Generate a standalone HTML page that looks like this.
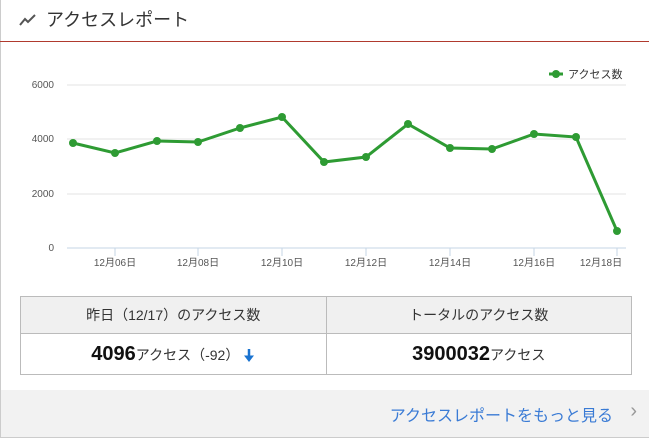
<!DOCTYPE html>
<html><head><meta charset="utf-8"><style>
body{margin:0;width:649px;height:440px;background:#fff;font-family:"Liberation Sans","Noto Sans CJK JP",sans-serif;overflow:hidden;position:relative}
.card{position:absolute;left:0;top:0;width:660px;height:438px;border-left:1px solid #ccc;border-bottom:1px solid #ccc;box-sizing:border-box}
.hd{position:absolute;left:0;top:0;width:649px;height:41px;border-bottom:1px solid #b03a2e}
.hd span{position:absolute;left:46px;top:6px;font-size:18px;color:#333}
table{position:absolute;left:20px;top:296px;width:612px;border-collapse:collapse;font-size:14px;color:#333}
td{border:1px solid #bbb;text-align:center;width:50%}
tr.h td{background:#f0f0f0;height:34px}
tr.v td{height:38px;font-size:14px}
b{font-size:20px;color:#111}
.ft{position:absolute;left:1px;top:390px;width:648px;height:47px;background:#f2f2f2}
.ft span{position:absolute;right:36px;top:12px;color:#3a7bd5;font-size:16px}
.ft i{position:absolute;right:12px;top:10px;color:#999;font-style:normal;font-size:20px}
</style></head><body>
<div class="card"></div>
<div class="hd"><svg style="position:absolute;left:19px;top:13px" width="18" height="14"><polyline points="1,12 6,6 9,9 16,2" fill="none" stroke="#555" stroke-width="2"/></svg><span>アクセスレポート</span></div>
<svg style="position:absolute;left:0;top:60px" width="649" height="220" font-family="Liberation Sans,Noto Sans CJK JP,sans-serif" font-size="10" fill="#555">
<g stroke="#e3e3e3"><line x1="67" y1="25" x2="626" y2="25"/><line x1="67" y1="79" x2="626" y2="79"/><line x1="67" y1="134" x2="626" y2="134"/></g>
<line x1="67" y1="188" x2="626" y2="188" stroke="#c6d6e6"/>
<g text-anchor="end"><text x="54" y="28">6000</text><text x="54" y="82">4000</text><text x="54" y="137">2000</text><text x="54" y="191">0</text></g>
<g stroke="#c6d6e6"><line x1="115" y1="188" x2="115" y2="196"/><line x1="198" y1="188" x2="198" y2="196"/><line x1="282" y1="188" x2="282" y2="196"/><line x1="366" y1="188" x2="366" y2="196"/><line x1="450" y1="188" x2="450" y2="196"/><line x1="534" y1="188" x2="534" y2="196"/><line x1="617" y1="188" x2="617" y2="196"/></g>
<g text-anchor="middle"><text x="115" y="206">12月06日</text><text x="198" y="206">12月08日</text><text x="282" y="206">12月10日</text><text x="366" y="206">12月12日</text><text x="450" y="206">12月14日</text><text x="534" y="206">12月16日</text><text x="601" y="206">12月18日</text></g>
<polyline fill="none" stroke="#2e9b33" stroke-width="3" points="73,83 115,93 157,81 198,82 240,68 282,57 324,102 366,97 408,64 450,88 492,89 534,74 576,77 617,171"/>
<g fill="#2e9b33"><circle cx="73" cy="83" r="4"/><circle cx="115" cy="93" r="4"/><circle cx="157" cy="81" r="4"/><circle cx="198" cy="82" r="4"/><circle cx="240" cy="68" r="4"/><circle cx="282" cy="57" r="4"/><circle cx="324" cy="102" r="4"/><circle cx="366" cy="97" r="4"/><circle cx="408" cy="64" r="4"/><circle cx="450" cy="88" r="4"/><circle cx="492" cy="89" r="4"/><circle cx="534" cy="74" r="4"/><circle cx="576" cy="77" r="4"/><circle cx="617" cy="171" r="4"/>
<line x1="549" y1="14" x2="563" y2="14" stroke="#2e9b33" stroke-width="3"/><circle cx="556" cy="14" r="4"/></g>
<text x="568" y="18" fill="#333" font-size="11">アクセス数</text>
</svg>
<table><tr class="h"><td>昨日（12/17）のアクセス数</td><td>トータルのアクセス数</td></tr>
<tr class="v"><td><b>4096</b>アクセス（-92） <svg width="12" height="15" style="vertical-align:-3px"><path d="M6 1V11" stroke="#1a73d0" stroke-width="2.5"/><path d="M1 7.5L6 14L11 7.5Z" fill="#1a73d0"/></svg></td><td><b>3900032</b>アクセス</td></tr></table>
<div class="ft"><span>アクセスレポートをもっと見る</span><i>›</i></div>
</body></html>
